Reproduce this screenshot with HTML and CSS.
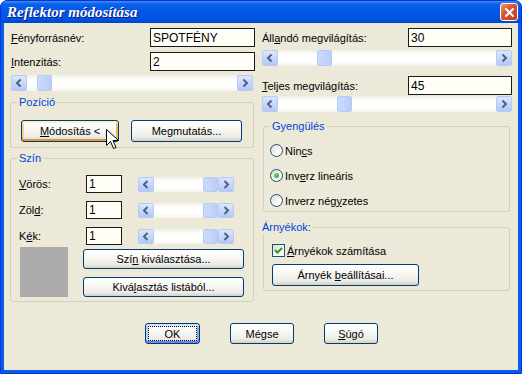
FILE: index.html
```html
<!DOCTYPE html>
<html>
	<head>
		<meta charset="UTF-8">
		<title>Reflektor módosítása</title>
		<link rel="stylesheet" href="styles.css">
	</head>
	<body>
		<div class="window">
			<div class="titlebar">
				<span class="title">Reflektor módosítása</span>
				<a class="close" href="javascript:;">
					<svg width="9" height="9" viewBox="0 0 9 9"><path d="M1 1L8 8M8 1L1 8" stroke="#fff" stroke-width="2" stroke-linecap="square"/></svg>
				</a>
			</div>
			<div class="client">
				<div class="columns">
					<!-- bal oszlop -->
					<div class="col">
						<div class="field">
							<label><u>F</u>ényforrásnév:</label>
							<input class="edit" type="text" value="SPOTFÉNY">
						</div>
						<div class="field second">
							<label><u>I</u>ntenzitás:</label>
							<input class="edit" type="text" value="2">
						</div>
						<div class="hscroll wide">
							<span class="sb-btn"><svg width="16" height="16" viewBox="0 0 16 16"><path d="M9.5 4.5L6 8l3.5 3.5" fill="none" stroke="#4D6185" stroke-width="2"/></svg></span>
							<span class="sb-track"><span class="sb-thumb" style="margin-left:10px"></span></span>
							<span class="sb-btn"><svg width="16" height="16" viewBox="0 0 16 16"><path d="M6.5 4.5L10 8l-3.5 3.5" fill="none" stroke="#4D6185" stroke-width="2"/></svg></span>
						</div>

						<fieldset class="group pos-group">
							<legend>Pozíció</legend>
							<div class="pos-body">
								<button class="btn hot" style="width:98px"><u>M</u>ódosítás &lt;</button>
								<button class="btn" style="width:111px">Me<u>g</u>mutatás...</button>
							</div>
						</fieldset>

						<fieldset class="group color-group">
							<legend>Szín</legend>
							<div class="color-body">
								<div class="color-row">
									<label><u>V</u>örös:</label>
									<input class="edit small" type="text" value="1">
									<div class="hscroll narrow">
										<span class="sb-btn"><svg width="16" height="15" viewBox="0 0 16 15"><path d="M9.5 4L6 7.5l3.5 3.5" fill="none" stroke="#4D6185" stroke-width="2"/></svg></span>
										<span class="sb-track"><span class="sb-thumb" style="margin-left:49px"></span></span>
										<span class="sb-btn"><svg width="16" height="15" viewBox="0 0 16 15"><path d="M6.5 4L10 7.5 6.5 11" fill="none" stroke="#4D6185" stroke-width="2"/></svg></span>
									</div>
								</div>
								<div class="color-row">
									<label>Zöl<u>d</u>:</label>
									<input class="edit small" type="text" value="1">
									<div class="hscroll narrow">
										<span class="sb-btn"><svg width="16" height="15" viewBox="0 0 16 15"><path d="M9.5 4L6 7.5l3.5 3.5" fill="none" stroke="#4D6185" stroke-width="2"/></svg></span>
										<span class="sb-track"><span class="sb-thumb" style="margin-left:49px"></span></span>
										<span class="sb-btn"><svg width="16" height="15" viewBox="0 0 16 15"><path d="M6.5 4L10 7.5 6.5 11" fill="none" stroke="#4D6185" stroke-width="2"/></svg></span>
									</div>
								</div>
								<div class="color-row">
									<label>K<u>é</u>k:</label>
									<input class="edit small" type="text" value="1">
									<div class="hscroll narrow">
										<span class="sb-btn"><svg width="16" height="15" viewBox="0 0 16 15"><path d="M9.5 4L6 7.5l3.5 3.5" fill="none" stroke="#4D6185" stroke-width="2"/></svg></span>
										<span class="sb-track"><span class="sb-thumb" style="margin-left:49px"></span></span>
										<span class="sb-btn"><svg width="16" height="15" viewBox="0 0 16 15"><path d="M6.5 4L10 7.5 6.5 11" fill="none" stroke="#4D6185" stroke-width="2"/></svg></span>
									</div>
								</div>
								<div class="swatch-row">
									<div class="swatch"></div>
									<div class="swatch-btns">
										<button class="btn">Szí<u>n</u> kiválasztása...</button>
										<button class="btn">Kivá<u>l</u>asztás listából...</button>
									</div>
								</div>
							</div>
						</fieldset>
					</div>

					<!-- jobb oszlop -->
					<div class="col">
						<div class="field">
							<label>Áll<u>a</u>ndó megvilágítás:</label>
							<input class="edit" type="text" value="30">
						</div>
						<div class="hscroll full first">
							<span class="sb-btn"><svg width="16" height="16" viewBox="0 0 16 16"><path d="M9.5 4.5L6 8l3.5 3.5" fill="none" stroke="#4D6185" stroke-width="2"/></svg></span>
							<span class="sb-track"><span class="sb-thumb" style="margin-left:39px"></span></span>
							<span class="sb-btn"><svg width="16" height="16" viewBox="0 0 16 16"><path d="M6.5 4.5L10 8l-3.5 3.5" fill="none" stroke="#4D6185" stroke-width="2"/></svg></span>
						</div>
						<div class="field third">
							<label><u>T</u>eljes megvilágítás:</label>
							<input class="edit" type="text" value="45">
						</div>
						<div class="hscroll full last">
							<span class="sb-btn"><svg width="16" height="16" viewBox="0 0 16 16"><path d="M9.5 4.5L6 8l3.5 3.5" fill="none" stroke="#4D6185" stroke-width="2"/></svg></span>
							<span class="sb-track"><span class="sb-thumb" style="margin-left:59px"></span></span>
							<span class="sb-btn"><svg width="16" height="16" viewBox="0 0 16 16"><path d="M6.5 4.5L10 8l-3.5 3.5" fill="none" stroke="#4D6185" stroke-width="2"/></svg></span>
						</div>

						<fieldset class="group falloff-group">
							<legend>Gyengülés</legend>
							<div class="radio-body">
								<div class="option"><span class="radio"></span>Nin<u>c</u>s</div>
								<div class="option"><span class="radio checked"></span>Inv<u>e</u>rz lineáris</div>
								<div class="option"><span class="radio"></span>Inverz nég<u>y</u>zetes</div>
							</div>
						</fieldset>

						<fieldset class="group shadow-group">
							<legend>Árnyékok:</legend>
							<div class="shadow-body">
								<div class="option">
									<span class="check"><svg width="11" height="11" viewBox="0 0 11 11"><path d="M2 5l2.5 2.5L9 3" fill="none" stroke="#21A121" stroke-width="2"/></svg></span><u>Á</u>rnyékok számítása
								</div>
								<button class="btn shadow-btn">Árnyék <u>b</u>eállításai...</button>
							</div>
						</fieldset>
					</div>
				</div>

				<div class="actions">
					<button class="btn default" style="width:55px">OK</button>
					<button class="btn" style="width:64px">Mégse</button>
					<button class="btn" style="width:54px"><u>S</u>úgó</button>
				</div>
			</div>

			<svg class="cursor" width="13" height="21" viewBox="0 0 13 21">
				<path d="M0.5 0.5V16.5L4.5 12.5L7.5 19.5L10 18.5L7 11.5H12.5Z" fill="#fff" stroke="#000" stroke-linejoin="round"/>
			</svg>
		</div>
	</body>
</html>
```

FILE: styles.css
```css
body{
	margin: 0;
	background: #fff;
	font-family: "Liberation Sans", Arial, sans-serif;
	font-size: 11px;
	color: #000;
}
.window{
	position: relative;
	width: 522px;
	height: 374px;
	box-sizing: border-box;
	display: flex;
	flex-direction: column;
	background: #0A5DE8;
	border: 1px solid #0831D9;
	border-radius: 7px 7px 0 0;
	overflow: hidden;
}
.titlebar{
	height: 22px;
	display: flex;
	align-items: center;
	justify-content: space-between;
	padding: 0 3px 0 6px;
	background: linear-gradient(#3D91F7 0, #0B62E6 3px, #0058E8 45%, #0054E0 80%, #0046CC 100%);
}
.title{
	font-family: "Liberation Serif", "Times New Roman", serif;
	font-weight: bold;
	font-style: italic;
	font-size: 15px;
	color: #fff;
	text-shadow: 1px 1px #0A1883;
}
.close{
	width: 16px;
	height: 16px;
	display: flex;
	align-items: center;
	justify-content: center;
	border: 1px solid #fff;
	border-radius: 3px;
	background: linear-gradient(135deg, #F0916E, #D8532F 45%, #C2391A);
}
.client{
	flex: 1;
	margin: 0 3px 3px;
	padding: 5px 6px 0 7px;
	background: #ECE9D8;
}
.columns{
	display: grid;
	grid-template-columns: 244px 250px;
	column-gap: 7px;
	align-items: start;
}
.col{
	display: flex;
	flex-direction: column;
}
u{
	text-decoration: underline;
	text-underline-offset: 1px;
}

/* szövegmezők */
.field{
	display: flex;
	align-items: center;
	justify-content: space-between;
	height: 19px;
}
.field.second{
	margin-top: 5px;
}
.field.third{
	margin-top: 10px;
}
.edit{
	box-sizing: border-box;
	width: 105px;
	height: 19px;
	margin: 0;
	padding: 0 2px;
	border: 1px solid #1A1A1A;
	background: #FFFEF6;
	font: inherit;
	font-size: 12px;
	color: #000;
	outline: none;
}
.col:last-child .edit{
	width: 104px;
}
.edit.small{
	width: 36px;
	height: 18px;
}

/* görgetősáv */
.hscroll{
	display: flex;
	height: 16px;
}
.hscroll.wide{
	width: 242px;
	margin-top: 4px;
}
.hscroll.full{
	width: 250px;
}
.hscroll.first{
	margin-top: 3px;
}
.hscroll.last{
	margin-top: 1px;
}
.hscroll.narrow{
	width: 96px;
	height: 15px;
	margin-left: 16px;
}
.sb-btn{
	box-sizing: border-box;
	width: 16px;
	flex: none;
	border: 1px solid #B7CBF5;
	border-radius: 2px;
	background: linear-gradient(#DCE7FE, #C3D4FB 60%, #B4C8F6);
	display: flex;
}
.sb-btn svg{
	margin: -1px;
}
.sb-track{
	flex: 1;
	display: flex;
	background: linear-gradient(#EFEEE7, #FDFDFB 25%, #FFFFFF 70%, #F3F2EC);
}
.sb-thumb{
	box-sizing: border-box;
	width: 15px;
	border: 1px solid #B7CBF5;
	border-radius: 2px;
	background: linear-gradient(90deg, #CADAFC, #C3D3FB 60%, #B9CBF7);
}

/* csoportok */
.group{
	margin: 0;
	padding: 0;
	border: 1px solid #D0D0BF;
	border-radius: 3px;
	min-width: 0;
}
.group legend{
	padding: 0 2px;
	margin-left: 6px;
	line-height: 13px;
	color: #0046D5;
}
.pos-group{
	margin: 5px 1px 0 -1px;
}
.pos-body{
	display: flex;
	gap: 12px;
	padding: 11px 0 5px 10px;
}
.color-group{
	margin: 4px 1px 0 -1px;
}
.color-body{
	padding: 10px 0 4px 8px;
}
.color-row{
	display: flex;
	align-items: center;
	height: 18px;
	margin-bottom: 8px;
}
.color-row label{
	width: 67px;
}
.swatch-row{
	display: flex;
	margin-top: -6px;
}
.swatch{
	width: 48px;
	height: 50px;
	margin-left: 1px;
	background: #ABABAB;
}
.swatch-btns{
	display: flex;
	flex-direction: column;
	gap: 8px;
	margin: 2px 0 0 15px;
}
.swatch-btns .btn{
	width: 161px;
	height: 20px;
}
.falloff-group{
	margin: 8px 2px 0 1px;
}
.radio-body{
	display: flex;
	flex-direction: column;
	gap: 10px;
	padding: 10px 0 3px 6px;
}
.option{
	display: flex;
	align-items: center;
	height: 15px;
}
.radio{
	box-sizing: border-box;
	width: 13px;
	height: 13px;
	margin-right: 2px;
	border: 1px solid #1C5180;
	border-radius: 50%;
	background: linear-gradient(135deg, #DCD9CF, #F6F5F1 55%, #FFFFFF);
	display: flex;
	align-items: center;
	justify-content: center;
}
.radio.checked::after{
	content: "";
	width: 5px;
	height: 5px;
	border-radius: 50%;
	background: radial-gradient(circle at 35% 35%, #71D86D, #21A121);
}
.shadow-group{
	margin: 9px 2px 0 1px;
}
.shadow-group legend{
	margin-left: -2px;
	padding: 0 1px 0 0;
}
.shadow-body{
	padding: 9px 0 4px 8px;
}
.check{
	box-sizing: border-box;
	width: 13px;
	height: 13px;
	margin-right: 2px;
	border: 1px solid #1C5180;
	background: linear-gradient(135deg, #DCD9CF, #F6F5F1 55%, #FFFFFF);
	display: flex;
	align-items: center;
	justify-content: center;
}
.shadow-btn{
	width: 147px;
	height: 20px;
	margin-top: 6px;
}

/* gombok */
.btn{
	box-sizing: border-box;
	height: 22px;
	padding: 0;
	border: 1px solid #003C74;
	border-radius: 3px;
	background: linear-gradient(#FFFFFF, #F7F7F3 45%, #ECEBE5 80%, #D6D0C5);
	font: inherit;
	color: #000;
}
.btn.hot{
	box-shadow: inset 0 2px #FFF0CF, inset 0 -2px #E5972F, inset 2px 0 #FAD48B, inset -2px 0 #F4B550;
}
.btn.default{
	box-shadow: inset 0 2px #CEE7FF, inset 0 -2px #6982EE, inset 2px 0 #B8D0F9, inset -2px 0 #8CA6EE;
	outline: 1px dotted #000;
	outline-offset: -4px;
}
.actions{
	display: flex;
	justify-content: center;
	gap: 30px;
	margin-top: 21px;
}
.actions .btn{
	height: 21px;
}
.cursor{
	position: absolute;
	left: 105px;
	top: 128px;
}
```
